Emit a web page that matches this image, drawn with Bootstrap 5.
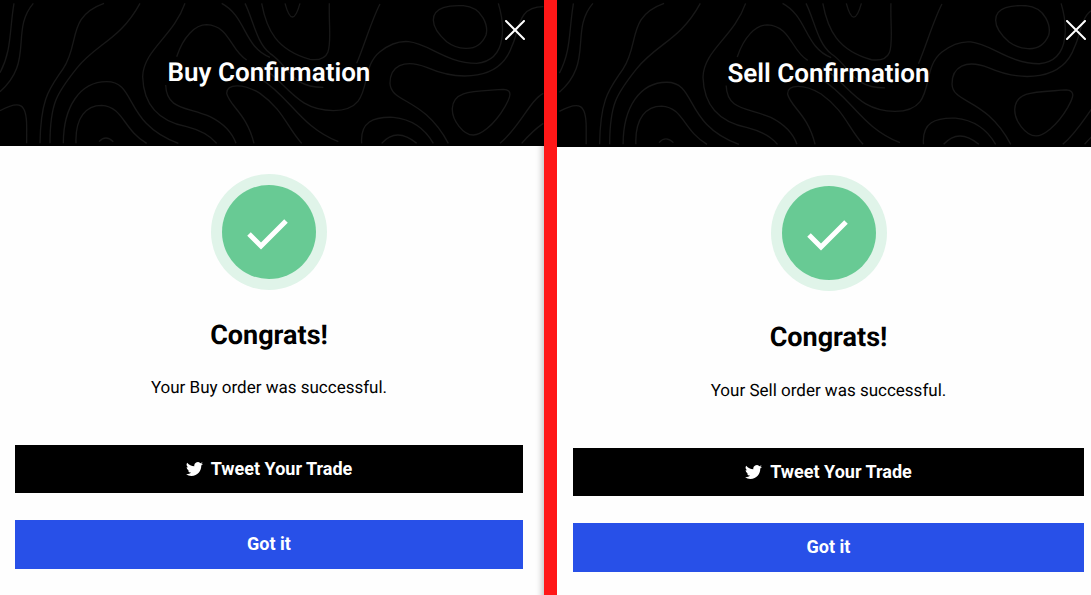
<!DOCTYPE html>
<html lang="en">
<head>
<meta charset="utf-8">
<meta name="viewport" content="width=device-width, initial-scale=1">
<title>Trade confirmation</title>
<link rel="stylesheet" href="https://cdn.jsdelivr.net/npm/bootstrap@5.3.0/dist/css/bootstrap.min.css">
<style>
  body { font-family: Roboto, "Liberation Sans", sans-serif; color: #000; background: #fefefe; text-rendering: geometricPrecision; }
  .split-bar { flex: 0 0 13px; background: #ff1717; }
  .panel-buy { flex: 544 1 0; --head: 146px; --pad-start: 15px; --pad-end: 21px; --close-end: 19px; --title-gap: 29px; --note-gap: 25px; --button-gap: 27px; }
  .panel-sell { flex: 534 1 0; --head: 147px; --pad-start: 16px; --pad-end: 7px; --close-end: 5px; --title-gap: 30px; --note-gap: 26px; --button-gap: 27px; }
  .panel-buy { box-shadow: inset -7px 0 6px -5px rgba(0,0,0,.25); }
  .confirm-head { height: var(--head); background: #000; color: #fff; padding-left: var(--pad-start); padding-right: var(--pad-end); }
  .confirm-head h1 { font-size: 26px; line-height: 32px; font-weight: 600; }
  .contours { stroke: #181818; stroke-width: 4; fill: none; }
  .close-x { top: 20px; right: var(--close-end); width: 20px; height: 20px; color: #fff; }
  .confirm-body { padding: 28px var(--pad-end) 26px var(--pad-start); }
  .ok-ring { width: 116px; height: 116px; background: #e0f4e9; }
  .ok-disc { width: 94px; height: 94px; background: #68ca94; }
  .confirm-body h2 { font-size: 27px; line-height: 32px; font-weight: 700; margin: var(--title-gap) 0 0; }
  .order-note { font-size: 17px; line-height: 24px; margin-top: var(--note-gap); }
  .actions { gap: var(--button-gap); margin-top: 45px; }
  .actions .btn { height: 48px; font-size: 18px; line-height: 24px; font-weight: 700; color: #fff; }
  .btn-tweet, .btn-tweet:hover { background: #000; }
  .actions .btn-got, .actions .btn-got:hover { background: #2850e8; height: 49px; padding-bottom: 2px !important; }
</style>
</head>
<body>
<svg width="0" height="0" class="position-absolute" aria-hidden="true">
  <defs>
    <g id="contour-lines">
      <path d="M42 10C28 90 36 150 0 218M100 10C48 70 75 140 50 205Q35 245 0 275M0 332C60 300 80 310 80 380V430M312 10C200 50 240 130 190 205C150 265 122 290 120 430M420 10C360 120 290 130 230 205C170 280 150 310 150 430M190 430C190 320 240 245 320 245C410 245 370 370 535 430M228 430C225 350 260 316 305 316C370 320 370 390 440 430M297 425Q317 403 340 425M555 10C520 110 430 150 428 230C430 300 460 360 560 380Q620 395 650 430M530 170C550 110 585 74 620 74C690 78 690 150 740 180M497 255C500 330 560 320 630 350Q690 380 708 430M762 430C740 340 690 320 680 280C680 250 730 250 780 280C850 330 860 380 905 430"/>
      <g transform="translate(810 0)">
        <path d="M-145 10C-70 50-80 140 0 172M-75 10C-50 60-40 130 0 160C60 200 60 262 160 262M-25 10C-10 90 20 150 120 178C200 188 175 120 178 10M260 190C285 130 305 60 330 12M45 10Q67 92 90 10M-25 200C60 260 80 330 190 332C320 330 260 210 330 155C440 70 490 190 620 190C720 180 700 60 685 10M-30 235C60 290 90 380 205 425M820 20C740 20 750 90 725 140C690 240 570 245 470 202C400 175 360 200 360 250C362 310 460 290 535 430M275 430C270 365 310 350 370 352Q450 360 490 430M335 430Q380 380 440 430M490 60C490 20 540 15 580 17C640 22 655 80 648 105C620 170 550 140 530 125Q490 90 490 60M547 325C550 270 610 275 700 268C735 270 715 300 705 320C670 380 630 405 610 405C580 405 545 360 547 325M690 430C750 380 780 300 820 280M755 430Q790 390 820 370"/>
      </g>
    </g>
    <symbol id="icon-close" viewBox="0 0 20 20"><path d="M1 1 19 19M19 1 1 19" fill="none" stroke="currentColor" stroke-width="2" stroke-linecap="round"/></symbol>
    <symbol id="icon-check" viewBox="0 0 94 94"><path d="M27 49 39 61 64 36" fill="none" stroke="#fff" stroke-width="5"/></symbol>
    <symbol id="icon-bird" viewBox="0 1 16 16"><path fill="currentColor" d="M5.026 15c6.038 0 9.341-5.003 9.341-9.334q.002-.211-.006-.422A6.700 6.700 0 0 0 16 3.542a6.700 6.700 0 0 1-1.889.518 3.300 3.300 0 0 0 1.447-1.817 6.500 6.500 0 0 1-2.087.793A3.286 3.286 0 0 0 7.875 6.030a9.320 9.320 0 0 1-6.767-3.429 3.290 3.290 0 0 0 1.018 4.382A3.300 3.300 0 0 1 .640 6.575v.045a3.290 3.290 0 0 0 2.632 3.218 3.200 3.200 0 0 1-.865.115 3 3 0 0 1-.614-.057 3.280 3.280 0 0 0 3.067 2.277A6.600 6.600 0 0 1 .780 13.580a6 6 0 0 1-.780-.045A9.340 9.340 0 0 0 5.026 15"/></symbol>
  </defs>
</svg>

<main class="d-flex min-vh-100">
  <section class="panel-buy" aria-labelledby="buy-title">
    <header class="confirm-head position-relative overflow-hidden d-flex align-items-center justify-content-center">
      <svg class="contours position-absolute top-0 start-0 w-100 h-100" viewBox="0 0 1632 438" preserveAspectRatio="xMinYMin slice" aria-hidden="true"><use href="#contour-lines"/></svg>
      <h1 id="buy-title" class="position-relative m-0">Buy Confirmation</h1>
      <button type="button" class="close-x position-absolute btn p-0 border-0 d-flex" aria-label="Close"><svg width="20" height="20"><use href="#icon-close"/></svg></button>
    </header>
    <div class="confirm-body text-center">
      <div class="ok-ring rounded-circle mx-auto d-flex align-items-center justify-content-center">
        <div class="ok-disc rounded-circle"><svg width="94" height="94" class="d-block" aria-hidden="true"><use href="#icon-check"/></svg></div>
      </div>
      <h2>Congrats!</h2>
      <p class="order-note mb-0">Your Buy order was successful.</p>
      <div class="actions d-grid">
        <button type="button" class="btn btn-tweet rounded-0 border-0 p-0 d-flex align-items-center justify-content-center gap-2"><svg width="17" height="17" aria-hidden="true"><use href="#icon-bird"/></svg>Tweet Your Trade</button>
        <button type="button" class="btn btn-got rounded-0 border-0 p-0">Got it</button>
      </div>
    </div>
  </section>

  <div class="split-bar"></div>

  <section class="panel-sell" aria-labelledby="sell-title">
    <header class="confirm-head position-relative overflow-hidden d-flex align-items-center justify-content-center">
      <svg class="contours position-absolute top-0 start-0 w-100 h-100" viewBox="-7 0 1602 438" preserveAspectRatio="xMinYMin slice" aria-hidden="true"><use href="#contour-lines"/></svg>
      <h1 id="sell-title" class="position-relative m-0">Sell Confirmation</h1>
      <button type="button" class="close-x position-absolute btn p-0 border-0 d-flex" aria-label="Close"><svg width="20" height="20"><use href="#icon-close"/></svg></button>
    </header>
    <div class="confirm-body text-center">
      <div class="ok-ring rounded-circle mx-auto d-flex align-items-center justify-content-center">
        <div class="ok-disc rounded-circle"><svg width="94" height="94" class="d-block" aria-hidden="true"><use href="#icon-check"/></svg></div>
      </div>
      <h2>Congrats!</h2>
      <p class="order-note mb-0">Your Sell order was successful.</p>
      <div class="actions d-grid">
        <button type="button" class="btn btn-tweet rounded-0 border-0 p-0 d-flex align-items-center justify-content-center gap-2"><svg width="17" height="17" aria-hidden="true"><use href="#icon-bird"/></svg>Tweet Your Trade</button>
        <button type="button" class="btn btn-got rounded-0 border-0 p-0">Got it</button>
      </div>
    </div>
  </section>
</main>
<script src="https://cdn.jsdelivr.net/npm/bootstrap@5.3.0/dist/js/bootstrap.bundle.min.js"></script>
</body>
</html>
